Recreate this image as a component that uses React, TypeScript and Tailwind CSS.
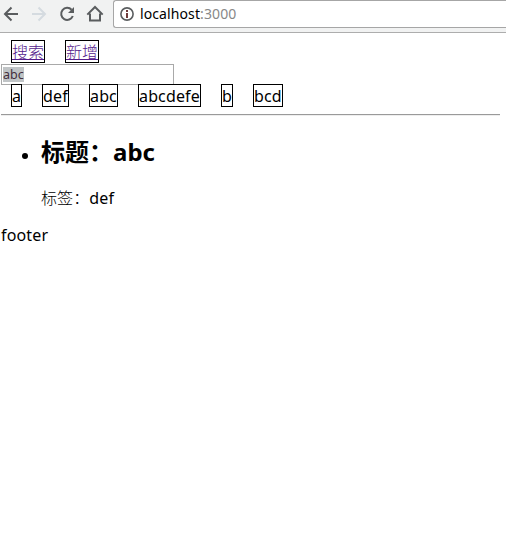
import React from "react";

const tags = [
  { name: "a", box: "w-[11px]" },
  { name: "def", box: "w-[27px]" },
  { name: "abc", box: "w-[29px]" },
  { name: "abcdefe", box: "w-[63px]" },
  { name: "b", box: "w-[12px]" },
  { name: "bcd", box: "w-[30px]" },
];

function Toolbar() {
  return (
    <header className="flex h-[33px] border-b border-[#adadad] bg-[#f1f2f2]">
      <svg width="113" height="28" viewBox="0 0 113 28" fill="none" strokeWidth="2" className="shrink-0">
        <path d="M18 14H5M11.5 7.5L5 14L11.5 20.5" stroke="#5a5d5f" />
        <path d="M32 14H45M38.5 7.5L45 14L38.5 20.5" stroke="#d5dbe0" />
        <path d="M71.6 9.8A6 6 0 1 0 72.8 16" stroke="#5a5d5f" />
        <path d="M74 7V13H68Z" fill="#5a5d5f" />
        <path d="M87.3 14.6L95 7L102.7 14.6M90 13.5V20.5H100V13.5" stroke="#5a5d5f" />
      </svg>
      <div className="flex h-[28px] flex-1 items-center rounded-l-[3px] border border-r-0 border-[#a6a6a6] bg-white pl-[6px]">
        <svg width="14" height="14" viewBox="0 0 14 14" fill="none" className="shrink-0">
          <circle cx="7" cy="7" r="6.1" stroke="#5a5d5f" strokeWidth="1.6" />
          <path d="M6 3H8V5H6ZM6 6H8V11H6Z" fill="#703c3c" />
        </svg>
        <span className="ml-[6px] whitespace-nowrap text-[14px] leading-[20px] tracking-[0.1px] text-black">
          localhost<span className="text-[#888]">:3000</span>
        </span>
      </div>
    </header>
  );
}

export default function App() {
  return (
    <div className="h-[554px] w-[506px] overflow-hidden bg-white font-['Noto_Sans','Noto_Sans_CJK_SC',sans-serif] text-[16px] text-black">
      <Toolbar />
      <main className="w-[500px] pl-px pt-[7px]">
        <nav className="flex gap-5 pl-[10px]">
          {["搜索", "新增"].map((label) => (
            <a key={label} href="#" className="h-[23px] w-[34px] whitespace-nowrap border border-black font-light leading-[23px] text-[#551a8b] underline">
              {label}
            </a>
          ))}
        </nav>
        <div className="mt-px flex h-[21px] w-[173px] items-center border border-[#a9a9a9] pl-px">
          <span className="h-[15px] bg-[#c0c4c6] text-[12.5px] leading-[16px] text-[#432f3d]">abc</span>
        </div>
        <div className="relative -mt-px flex gap-5 pl-[10px]">
          {tags.map((tag) => (
            <span key={tag.name} className={`h-[23px] whitespace-nowrap border border-black leading-[22px] tracking-[0.15px] ${tag.box}`}>
              {tag.name}
            </span>
          ))}
        </div>
        <hr className="mt-[7px] h-[2px] border-b border-t border-b-[#eee] border-t-[#9a9a9a]" />
        <ul className="mt-[20px] pl-[40px]">
          <li className="flex">
            <span className="-ml-[19px] mr-[13px] mt-[17px] size-[6px] shrink-0 rounded-full bg-black" />
            <div>
              <h2 className="text-[24px] font-bold leading-[32px]">标题：abc</h2>
              <p className="mt-[19px] leading-[22px] tracking-[0.1px]"><span className="font-light">标签：</span>def</p>
            </div>
          </li>
        </ul>
        <footer className="mt-[15px] leading-[22px] tracking-[0.15px]">footer</footer>
      </main>
    </div>
  );
}
